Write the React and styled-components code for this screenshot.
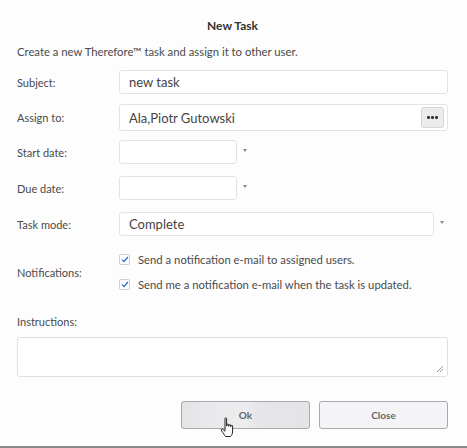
import React from 'react'
import styled, { createGlobalStyle } from 'styled-components'

const GlobalStyle = createGlobalStyle`
  html, body {
    margin: 0;
    padding: 0;
    background: #ffffff;
  }
  body {
    font-family: Lato, "Liberation Sans", sans-serif;
    color: #4a4a4a;
  }
`

const Dialog = styled.div`
  position: relative;
  width: 467px;
  height: 448px;
  box-sizing: border-box;
  background: #fdfdfe;
  border-bottom: 2px solid #8a8a8a;
  padding: 18px 19px 0 17px;
  display: flex;
  flex-direction: column;
`

const Title = styled.h1`
  margin: 0;
  text-align: center;
  font-size: 12px;
  font-weight: bold;
  color: #333;
  line-height: 16px;
`

const Intro = styled.p`
  margin: 11px 0 0 0;
  font-size: 11.3px;
  line-height: 14px;
  color: #4a4a4a;
`

const Row = styled.div`
  margin-top: ${p => p.mt}px;
  display: grid;
  grid-template-columns: 102px 1fr;
  align-items: center;
`

const Label = styled.label`
  font-size: 11px;
  color: #4a4a4a;
`

const Field = styled.div`
  display: flex;
  align-items: center;
  gap: 6px;
`

const TextBox = styled.div`
  box-sizing: border-box;
  height: ${p => p.h || 24}px;
  width: ${p => (p.w ? `${p.w}px` : '100%')};
  border: 1px solid #e3e3e6;
  border-radius: 3px;
  background: #fff;
  display: flex;
  align-items: center;
  padding: 0 3px 0 9px;
  font-size: 13px;
  color: #444;
`

const Grow = styled.span`
  flex: 1;
`

const DotsButton = styled.div`
  width: 23px;
  height: 21px;
  box-sizing: border-box;
  border: 1px solid #d6d6da;
  border-radius: 3px;
  background: #ececef;
  display: flex;
  align-items: center;
  justify-content: center;
  gap: 1.5px;
`

const Dot = styled.i`
  width: 2.5px;
  height: 2.5px;
  border-radius: 50%;
  background: #333;
`

const Caret = styled.span`
  width: 0;
  height: 0;
  border-left: 2.5px solid transparent;
  border-right: 2.5px solid transparent;
  border-top: 3px solid #888;
  margin-bottom: 4px;
`

const Checks = styled.div`
  display: flex;
  flex-direction: column;
  gap: 12px;
`

const CheckRow = styled.div`
  display: flex;
  align-items: center;
  gap: 8px;
  font-size: 11.3px;
  line-height: 13px;
  color: #4a4a4a;
`

const Box = styled.span`
  width: 11px;
  height: 11px;
  box-sizing: border-box;
  border: 1px solid #d0d0d4;
  border-radius: 2px;
  background: #fff;
  display: flex;
  align-items: center;
  justify-content: center;
`

const Instructions = styled.div`
  margin-top: 24px;
  display: flex;
  flex-direction: column;
  gap: 9px;
`

const TextArea = styled.div`
  position: relative;
  height: 40px;
  box-sizing: border-box;
  border: 1px solid #e0e0e4;
  border-radius: 3px;
  background: #fff;
`

const Grip = styled.svg`
  position: absolute;
  right: 3px;
  bottom: 3px;
`

const Buttons = styled.div`
  margin-top: 24px;
  display: flex;
  justify-content: flex-end;
  gap: 9px;
`

const Button = styled.div`
  width: 129px;
  height: 28px;
  box-sizing: border-box;
  border: 1px solid #a9a9ad;
  border-radius: 3px;
  background: ${p => (p.hover
    ? 'linear-gradient(90deg, #e4e4e6 0%, #e9e9eb 20%, #ededef 50%, #e6e6e8 60%, #e4e4e6 100%)'
    : '#f4f4f6')};
  display: flex;
  align-items: center;
  justify-content: center;
  font-size: 10px;
  font-weight: bold;
  color: #666;
`

const Pointer = styled.svg`
  position: absolute;
  left: 220px;
  top: 417px;
`

const Check = () => (
  <Box>
    <svg width="8" height="7" viewBox="0 0 8 7">
      <path d="M1 3.6 L3 5.5 L7 1" fill="none" stroke="#2a6fd1" strokeWidth="1.3" />
    </svg>
  </Box>
)

export default function App() {
  return (
    <>
      <GlobalStyle />
      <Dialog>
        <Title>New Task</Title>
        <Intro>Create a new Therefore™ task and assign it to other user.</Intro>

        <Row mt={11}>
          <Label>Subject:</Label>
          <TextBox>new task</TextBox>
        </Row>

        <Row mt={10}>
          <Label>Assign to:</Label>
          <TextBox h={27}>
            <Grow>Ala,Piotr Gutowski</Grow>
            <DotsButton><Dot /><Dot /><Dot /></DotsButton>
          </TextBox>
        </Row>

        <Row mt={9}>
          <Label>Start date:</Label>
          <Field>
            <TextBox w={118} />
            <Caret />
          </Field>
        </Row>

        <Row mt={12}>
          <Label>Due date:</Label>
          <Field>
            <TextBox w={118} />
            <Caret />
          </Field>
        </Row>

        <Row mt={12}>
          <Label>Task mode:</Label>
          <Field>
            <TextBox w={315}>Complete</TextBox>
            <Caret />
          </Field>
        </Row>

        <Row mt={17}>
          <Label>Notifications:</Label>
          <Checks>
            <CheckRow><Check />Send a notification e-mail to assigned users.</CheckRow>
            <CheckRow><Check />Send me a notification e-mail when the task is updated.</CheckRow>
          </Checks>
        </Row>

        <Instructions>
          <Label>Instructions:</Label>
          <TextArea>
            <Grip width="8" height="8" viewBox="0 0 8 8">
              <path d="M7 1 L1 7 M7 4 L4 7" stroke="#999" strokeWidth="1" />
            </Grip>
          </TextArea>
        </Instructions>

        <Buttons>
          <Button hover>Ok</Button>
          <Button>Close</Button>
        </Buttons>

        <Pointer width="16" height="22" viewBox="0 0 16 22">
          <path
            d="M5 1.5 C5 0.7 6.6 0.7 6.6 1.5 L6.6 9 L7 9 L7 7.6 C7 6.8 8.6 6.8 8.6 7.6 L8.6 9.2 L9 9.2 L9 8.2 C9 7.4 10.6 7.4 10.6 8.2 L10.6 9.6 L11 9.6 L11 9 C11 8.2 12.6 8.2 12.6 9 L12.6 14 C12.6 17 11.5 18.5 10.5 19.5 L5.5 19.5 C4.5 18 3 16 1.3 13.2 C0.8 12.4 1.8 11.6 2.5 12.2 L5 14.2 Z"
            fill="#fff"
            stroke="#222"
            strokeWidth="1"
            strokeLinejoin="round"
          />
        </Pointer>
      </Dialog>
    </>
  )
}
